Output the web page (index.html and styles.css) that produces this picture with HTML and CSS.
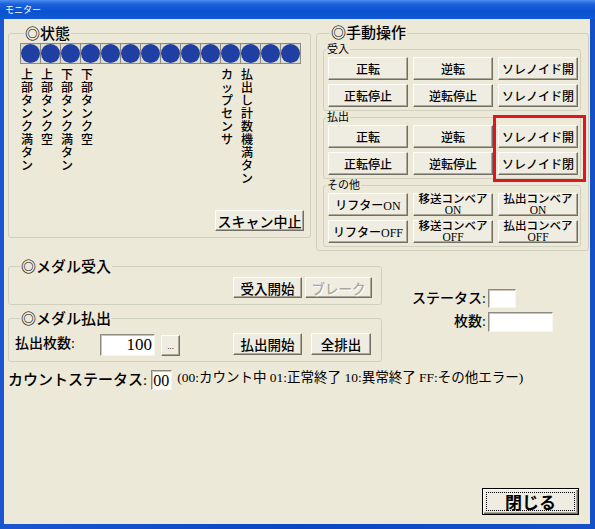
FILE: index.html
```html
<!DOCTYPE html>
<html lang="ja">
<head>
<meta charset="utf-8">
<title>モニター</title>
<link rel="stylesheet" href="styles.css">
</head>
<body>
<div class="window">
  <div class="titlebar"><span class="title-text">モニター</span></div>
  <div class="client">
    <div class="top-row">
      <div class="group status-group">
        <div class="legend">◎状態</div>
        <div class="led-row">
          <span class="led"></span><span class="led"></span><span class="led"></span><span class="led"></span><span class="led"></span><span class="led"></span><span class="led"></span><span class="led"></span><span class="led"></span><span class="led"></span><span class="led"></span><span class="led"></span><span class="led"></span><span class="led"></span>
        </div>
        <div class="led-labels">
          <span class="vlabel">上部タンク満タン</span>
          <span class="vlabel">上部タンク空</span>
          <span class="vlabel">下部タンク満タン</span>
          <span class="vlabel">下部タンク空</span>
          <span class="vlabel c11">カップセンサ</span>
          <span class="vlabel">払出し計数機満タン</span>
        </div>
        <div class="status-actions"><button class="btn btn-scan">スキャン中止</button></div>
      </div>
      <div class="group manual-group">
        <div class="legend">◎手動操作</div>
        <div class="subgroup">
          <div class="sublegend">受入</div>
          <div class="btn-grid">
            <button class="btn">正転</button>
            <button class="btn">逆転</button>
            <button class="btn">ソレノイド開</button>
            <button class="btn">正転停止</button>
            <button class="btn">逆転停止</button>
            <button class="btn">ソレノイド閉</button>
          </div>
        </div>
        <div class="subgroup">
          <div class="sublegend">払出</div>
          <div class="btn-grid">
            <button class="btn">正転</button>
            <button class="btn">逆転</button>
            <button class="btn">ソレノイド開</button>
            <button class="btn">正転停止</button>
            <button class="btn">逆転停止</button>
            <button class="btn">ソレノイド閉</button>
          </div>
        </div>
        <div class="subgroup">
          <div class="sublegend">その他</div>
          <div class="btn-grid">
            <button class="btn">リフターON</button>
            <button class="btn two"><span class="ln">移送コンベア</span><span class="ln">ON</span></button>
            <button class="btn two"><span class="ln">払出コンベア</span><span class="ln">ON</span></button>
            <button class="btn">リフターOFF</button>
            <button class="btn two"><span class="ln">移送コンベア</span><span class="ln">OFF</span></button>
            <button class="btn two"><span class="ln">払出コンベア</span><span class="ln">OFF</span></button>
          </div>
        </div>
        <div class="highlight"></div>
      </div>
    </div>

    <div class="lower-row">
      <div class="lower-left">
        <div class="group medal-in">
          <div class="legend">◎メダル受入</div>
          <div class="row">
            <button class="btn btn-in">受入開始</button>
            <button class="btn btn-break" disabled>ブレーク</button>
          </div>
        </div>
        <div class="group medal-out">
          <div class="legend">◎メダル払出</div>
          <div class="row">
            <span class="label label-count">払出枚数:</span>
            <span class="field field-num">100</span>
            <button class="btn btn-dots">...</button>
            <button class="btn btn-start">払出開始</button>
            <button class="btn btn-all">全排出</button>
          </div>
        </div>
      </div>
      <div class="status-fields">
        <span class="label label-r">ステータス:</span>
        <span class="field field-s"></span>
        <span class="label label-r">枚数:</span>
        <span class="field field-m"></span>
      </div>
    </div>

    <div class="count-row">
      <span class="label label-big">カウントステータス:</span>
      <span class="field field-count">00</span>
      <span class="note">(00:カウント中 01:正常終了 10:異常終了 FF:その他エラー)</span>
    </div>

    <div class="footer">
      <button class="btn btn-close"><span class="focus">閉じる</span></button>
    </div>
  </div>
</div>
</body>
</html>
```

FILE: styles.css
```css
* { box-sizing: border-box; }
html, body { margin: 0; padding: 0; }
body {
  background: #0a4bc8;
  font-family: "Liberation Serif", "Noto Sans CJK JP", serif;
  color: #000;
}

.window {
  width: 595px;
  height: 529px;
  display: flex;
  flex-direction: column;
  background: linear-gradient(to right, #1b56d0, #0c47c2 50%, #1650c8);
}

.titlebar {
  height: 19px;
  flex: none;
  display: flex;
  align-items: center;
  padding-left: 5px;
  background: linear-gradient(to bottom, #4d8ef2 0%, #1a60da 22%, #0b52d0 60%, #1158d6 100%);
}
.title-text {
  color: #fff;
  font-family: "Noto Sans CJK JP", sans-serif;
  font-size: 9px;
  line-height: 10px;
}

.client {
  flex: 1;
  margin: 0 5px 5px 4px;
  background: #ece9d8;
  display: flex;
  flex-direction: column;
  padding: 14px 0 0 4px;
}

/* group boxes */
.group {
  border: 1px solid #d0d0bf;
  border-radius: 3px;
}
.legend {
  width: fit-content;
  margin: -8px 0 0 4px;
  padding: 0 1px;
  background: #ece9d8;
  font-family: "Liberation Serif", "Noto Sans CJK JP", serif;
  font-size: 15px;
  line-height: 16px;
  font-weight: 500;
}

.top-row {
  display: flex;
  align-items: flex-start;
  gap: 5px;
}

/* status */
.status-group {
  width: 303px;
  height: 205px;
  display: flex;
  flex-direction: column;
  padding: 0 6px 6px 11px;
}
.led-row {
  display: flex;
  width: fit-content;
  margin-top: 1px;
  border: 1px solid #8c8c84;
  border-right: none;
  background: #dedbcf;
}
.led {
  width: 20px;
  height: 19px;
  border-right: 1px solid #8c8c84;
  display: flex;
  align-items: center;
  justify-content: center;
}
.led::before {
  content: "";
  width: 19px;
  height: 19px;
  border-radius: 50%;
  background: #1f3fa2;
}
.led-labels {
  display: grid;
  grid-template-columns: repeat(14, 20px);
  align-items: start;
  margin-top: 3px;
  padding-left: 1px;
}
.vlabel {
  width: 13px;
  font-family: "Noto Sans CJK JP", sans-serif;
  font-size: 12px;
  line-height: 13px;
  font-weight: 500;
  word-break: break-all;
  line-break: anywhere;
}
.vlabel.c11 { grid-column: 11; }
.status-actions {
  margin-top: auto;
  display: flex;
  justify-content: flex-end;
}

/* buttons */
.btn {
  font-family: "Liberation Serif", "Noto Sans CJK JP", serif;
  font-size: 12px;
  font-weight: 500;
  color: #000;
  background: #efede2;
  border: 1px solid;
  border-color: #fdfdfa #716f64 #716f64 #fdfdfa;
  box-shadow: inset -1px -1px 0 #aca899;
  padding: 0;
  margin: 0;
  display: flex;
  align-items: center;
  justify-content: center;
  text-align: center;
}
.btn-scan { width: 89px; height: 21px; font-size: 14px; }

/* manual operation */
.manual-group {
  width: 273px;
  position: relative;
  padding: 0 7px 3px 6px;
}
.manual-group > .legend { margin-left: 7px; line-height: 15px; }
.subgroup {
  border: 1px solid #d0d0bf;
  border-radius: 3px;
  margin-top: 8px;
  padding: 0 2px 3px 4px;
}
.subgroup + .subgroup { margin-top: 6px; }
.sublegend {
  width: fit-content;
  margin: -7px 0 0 -2px;
  padding: 0 1px;
  background: #ece9d8;
  font-family: "Liberation Serif", "Noto Sans CJK JP", serif;
  font-size: 11px;
  line-height: 12px;
}
.btn-grid {
  display: grid;
  grid-template-columns: repeat(3, 1fr);
  gap: 4px 5px;
  margin-top: 2px;
}
.btn-grid .btn { height: 23px; }
.btn-grid .btn.two {
  flex-direction: column;
  font-size: 11.5px;
}
.ln { display: block; line-height: 10.5px; }
.highlight {
  position: absolute;
  left: 176px;
  top: 81px;
  width: 93px;
  height: 67px;
  border: 3px solid #e3141c;
}

/* lower section */
.lower-row {
  display: flex;
  margin-top: 15px;
}
.lower-left {
  width: 374px;
  display: flex;
  flex-direction: column;
}
.medal-in { padding: 0 9px 6px 6px; }
.medal-in > .legend,
.medal-out > .legend { margin-left: 5px; }
.medal-in .row {
  margin-top: 2px;
  display: flex;
  justify-content: flex-end;
  gap: 3px;
}
.btn-in { width: 69px; height: 21px; font-size: 13.5px; }
.btn-break {
  width: 67px;
  height: 21px;
  font-size: 13.5px;
  color: #aca899;
  text-shadow: 1px 1px 0 #fff;
}
.medal-out {
  margin-top: 13px;
  padding: 0 10px 5px 6px;
}
.medal-out .row {
  margin-top: 5px;
  height: 24px;
  display: flex;
  align-items: center;
}
.label { font-weight: 500; font-size: 14px; }
.label-count { width: 85px; line-height: 18px; }
.field {
  background: #fff;
  border: 1px solid;
  border-color: #8d8b80 #f6f5ef #f6f5ef #8d8b80;
  box-shadow: inset 1px 1px 0 #c8c5b8;
}
.field-num {
  width: 55px;
  height: 22px;
  font-size: 17px;
  line-height: 20px;
  text-align: right;
  padding-right: 2px;
  margin-top: 2px;
}
.btn-dots {
  width: 19px;
  height: 21px;
  margin-left: 6px;
  margin-top: 3px;
  font-size: 9px;
  align-items: flex-end;
  padding-bottom: 4px;
}
.btn-start { margin-left: auto; width: 69px; height: 22px; font-size: 13.5px; }
.btn-all { margin-left: 9px; width: 60px; height: 22px; font-size: 13.5px; }

.status-fields {
  margin: 23px 0 0 23px;
  display: grid;
  grid-template-columns: 81px auto;
  column-gap: 2px;
  row-gap: 4px;
  align-items: center;
  align-self: flex-start;
}
.label-r { text-align: right; line-height: 16px; }
.field-s { width: 28px; height: 19px; }
.field-m { width: 65px; height: 20px; }

.count-row {
  margin-top: 8px;
  display: flex;
  align-items: center;
  height: 20px;
}
.label-big { font-size: 15px; line-height: 20px; }
.field-count {
  width: 21px;
  height: 20px;
  margin-left: 4px;
  font-size: 16px;
  line-height: 20px;
  padding-left: 1px;
}
.note {
  margin-left: 5px;
  font-size: 13.5px;
  line-height: 18px;
  margin-top: -4px;
}

.footer {
  margin-top: auto;
  display: flex;
  justify-content: flex-end;
  padding: 0 11px 9px 0;
}
.btn-close {
  width: 97px;
  height: 27px;
  font-size: 17px;
  font-weight: 700;
  border: 1px solid #000;
  box-shadow: inset 1px 1px 0 #fdfdfa, inset -1px -1px 0 #716f64, inset -2px -2px 0 #aca899;
  padding: 3px;
}
.focus {
  display: flex;
  align-items: center;
  justify-content: center;
  width: 100%;
  height: 100%;
  border: 1px dotted #000;
}
```
